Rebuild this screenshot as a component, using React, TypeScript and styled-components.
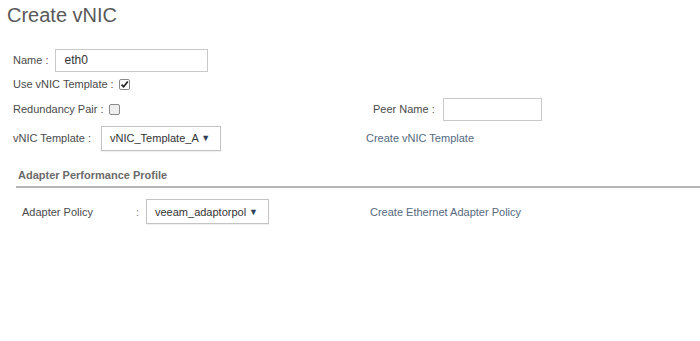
import { createGlobalStyle, styled } from "styled-components";

const GlobalStyle = createGlobalStyle`
  html, body {
    margin: 0;
    padding: 0;
    background: #ffffff;
    font-family: "Liberation Sans", Arial, sans-serif;
  }
`;

const Page = styled.div`
  width: 700px;
  height: 341px;
  background: #fff;
  overflow: hidden;
`;

const Title = styled.h1`
  margin: 0;
  padding: 3px 0 0 7px;
  font-size: 20px;
  font-weight: normal;
  color: #595959;
  line-height: 24px;
`;

const Form = styled.div`
  display: flex;
  flex-direction: column;
  padding: 21px 0 0 13px;
`;

const Row = styled.div<{ $h: number }>`
  display: flex;
  align-items: center;
  height: ${(p) => p.$h}px;
`;

const Left = styled.div`
  display: flex;
  align-items: center;
  width: 353px;
`;

const Right = styled.div<{ $pad: number }>`
  display: flex;
  align-items: center;
  padding-left: ${(p) => p.$pad}px;
`;

const Label = styled.span<{ $gap?: number }>`
  font-size: 11px;
  color: #4a4a4a;
  margin-right: ${(p) => p.$gap ?? 6}px;
  white-space: nowrap;
`;

const TextBox = styled.div<{ $w: number }>`
  width: ${(p) => p.$w}px;
  height: 23px;
  box-sizing: border-box;
  border: 1px solid #c9c9c9;
  padding: 0 8px;
  display: flex;
  align-items: center;
  font-size: 12px;
  color: #333;
`;

const Check = styled.span<{ $on?: boolean }>`
  width: 9px;
  height: 9px;
  border: 1px solid #8a8a8a;
  border-radius: 2px;
  background: ${(p) => (p.$on ? "#fff" : "#eeeeee")};
  display: inline-flex;
  align-items: center;
  justify-content: center;
`;

const Select = styled.div<{ $w: number }>`
  width: ${(p) => p.$w}px;
  height: 25px;
  box-sizing: border-box;
  border: 1px solid #c4c4c4;
  padding: 0 0 0 8px;
  display: flex;
  align-items: center;
  justify-content: space-between;
  font-size: 11px;
  color: #333;
  box-shadow: 0 1px 1px rgba(0, 0, 0, 0.06);
`;

const Arrow = styled.span`
  font-size: 9px;
  color: #2d3f56;
  margin-right: 10px;
`;

const Link = styled.span`
  font-size: 11px;
  color: #55697e;
  white-space: nowrap;
`;

const Section = styled.div`
  margin: 15px 0 0 16px;
  border-bottom: 2px solid #b5b5b5;
  padding: 0 0 4px 2px;
  font-size: 11px;
  line-height: 13px;
  font-weight: bold;
  color: #6b6b6b;
`;

const PolicyRow = styled.div`
  display: flex;
  align-items: center;
  padding: 11px 0 0 22px;
`;

const PolicyLabel = styled.span`
  width: 114px;
  font-size: 11px;
  color: #4a4a4a;
`;

const Colon = styled.span`
  width: 10px;
  font-size: 11px;
  color: #777;
`;

const CheckMark = () => (
  <svg width="9" height="9" viewBox="0 0 9 9">
    <path d="M1.5 4.6 L3.6 6.8 L7.8 1.4" fill="none" stroke="#222" strokeWidth="1.7" />
  </svg>
);

export default function App() {
  return (
    <Page>
      <GlobalStyle />
      <Title>Create vNIC</Title>
      <Form>
        <Row $h={24}>
          <Label $gap={7}>Name :</Label>
          <TextBox $w={153}>eth0</TextBox>
        </Row>
        <Row $h={24}>
          <Label $gap={5}>Use vNIC Template :</Label>
          <Check $on>
            <CheckMark />
          </Check>
        </Row>
        <Row $h={26}>
          <Left>
            <Label $gap={5}>Redundancy Pair :</Label>
            <Check />
          </Left>
          <Right $pad={7}>
            <Label $gap={8}>Peer Name :</Label>
            <TextBox $w={99} />
          </Right>
        </Row>
        <Row $h={32}>
          <Left>
            <Label $gap={10}>vNIC Template :</Label>
            <Select $w={120}>
              vNIC_Template_A
              <Arrow>▼</Arrow>
            </Select>
          </Left>
          <Right $pad={0}>
            <Link>Create vNIC Template</Link>
          </Right>
        </Row>
      </Form>
      <Section>Adapter Performance Profile</Section>
      <PolicyRow>
        <PolicyLabel>Adapter Policy</PolicyLabel>
        <Colon>:</Colon>
        <Select $w={123}>
          veeam_adaptorpol
          <Arrow>▼</Arrow>
        </Select>
        <Right $pad={101}>
          <Link>Create Ethernet Adapter Policy</Link>
        </Right>
      </PolicyRow>
    </Page>
  );
}
